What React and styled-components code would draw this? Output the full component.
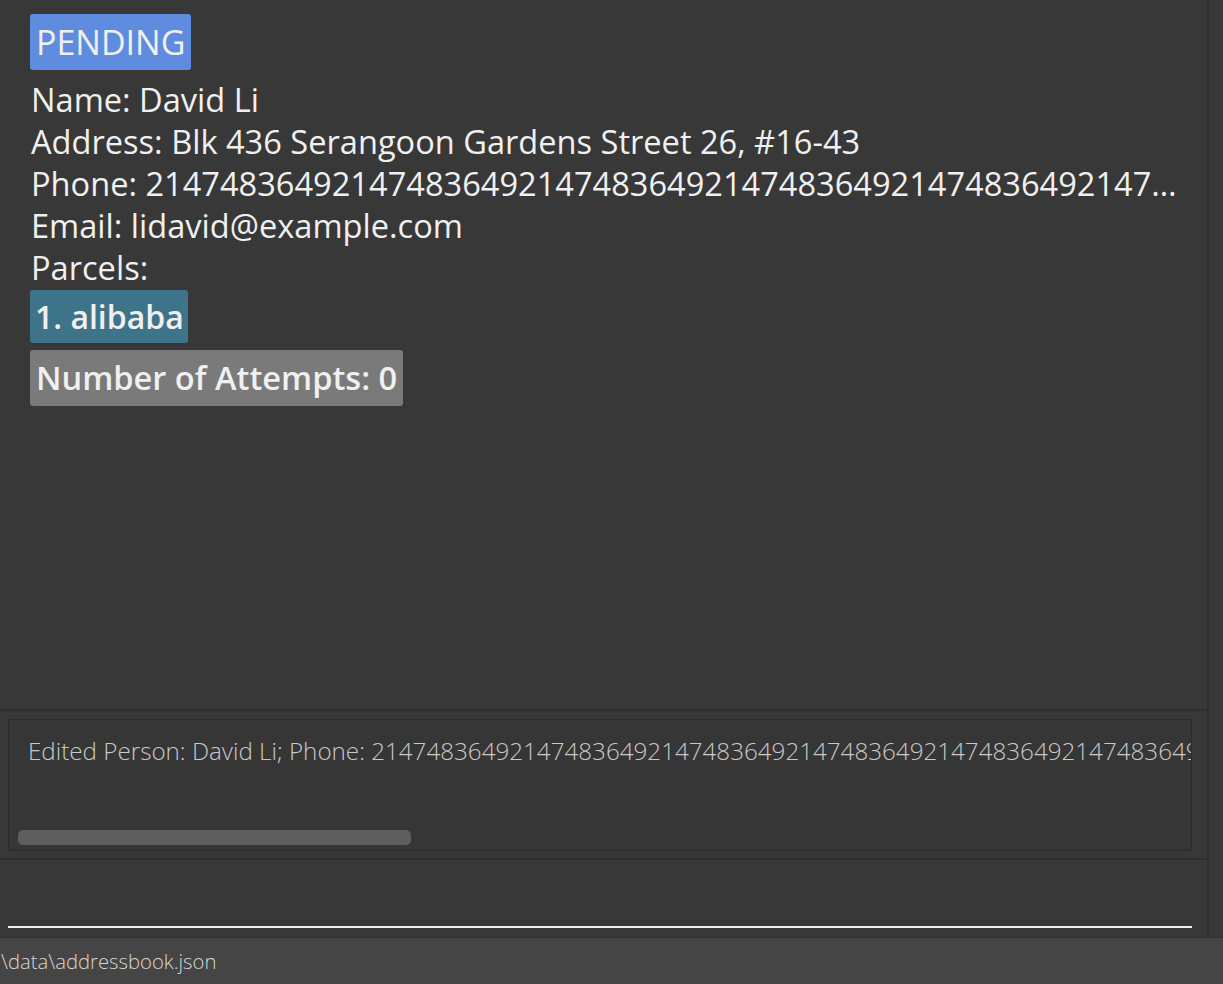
import React from "react";
import styled, { createGlobalStyle } from "styled-components";

const Global = createGlobalStyle`
  html, body { margin: 0; padding: 0; background: #383838; }
  body { font-family: "Open Sans", "Noto Sans", sans-serif; overflow: hidden; }
  * { box-sizing: border-box; }
`;

const Page = styled.div`
  width: 1223px;
  height: 984px;
  display: flex;
  flex-direction: column;
  background: #383838;
`;

const Body = styled.div`
  flex: 1;
  display: grid;
  grid-template-columns: 1207px 2px 1fr;
  min-height: 0;
`;

const VDivider = styled.div`
  background: #2e2e2e;
`;

const MainColumn = styled.div`
  display: flex;
  flex-direction: column;
  min-height: 0;
`;

const HDivider = styled.div`
  height: 2px;
  background: #2e2e2e;
`;

const CardArea = styled.div`
  height: 709px;
  padding: 14px 0 0 30px;
  display: flex;
  flex-direction: column;
  align-items: flex-start;
`;

const Badge = styled.div`
  background: ${(p) => p.$bg};
  color: #f0f0f0;
  font-size: ${(p) => p.$size || 32}px;
  font-weight: ${(p) => p.$weight || 400};
  line-height: ${(p) => p.$h || 56}px;
  height: ${(p) => p.$h || 56}px;
  padding: 0 ${(p) => p.$pr || 6}px 0 ${(p) => p.$pl || 6}px;
  border-radius: 3px;
  margin-top: ${(p) => p.$mt || 0}px;
`;

const Fields = styled.div`
  display: flex;
  flex-direction: column;
  padding-top: 9px;
  margin-bottom: 1px;
`;

const Field = styled.div`
  color: #f0f0f0;
  font-size: 32.6px;
  line-height: 42px;
  white-space: nowrap;
  overflow: hidden;
  text-overflow: ellipsis;
  max-width: 1152px;
  padding-left: 1px;
`;

const ResultWrap = styled.div`
  height: 147px;
  padding: 8px 15px 7px 8px;
  display: flex;
`;

const ResultBox = styled.div`
  flex: 1;
  border: 1px solid #2b2b2b;
  background: #363636;
  position: relative;
  overflow: hidden;
  padding: 14px 0 0 19px;
`;

const ResultText = styled.div`
  color: #c9c9c9;
  font-size: 24.2px;
  font-weight: 300;
  white-space: nowrap;
  overflow: hidden;
  width: 1163px;
`;

const ScrollThumb = styled.div`
  position: absolute;
  left: 9px;
  bottom: 5px;
  width: 393px;
  height: 15px;
  border-radius: 5px;
  background: #5e5e5e;
`;

const CommandArea = styled.div`
  flex: 1;
  padding: 0 15px 9px 8px;
  display: flex;
  align-items: flex-end;
`;

const CommandLine = styled.div`
  flex: 1;
  height: 2px;
  background: #f2f2f2;
`;

const StatusBar = styled.div`
  height: 47px;
  background: #454545;
  border-top: 1px solid #333;
  color: #d6d6d6;
  font-size: 20.3px;
  font-weight: 300;
  display: flex;
  align-items: center;
  padding: 0 0 0 1px;
`;

export default function App() {
  const phone = "Phone: " + "2147483649".repeat(12);
  const result = "Edited Person: David Li; Phone: " + "2147483649".repeat(12);
  return (
    <>
      <Global />
      <Page>
        <Body>
          <MainColumn>
            <CardArea>
              <Badge $bg="#5f8cdf" $size={34}>PENDING</Badge>
              <Fields>
                <Field>Name: David Li</Field>
                <Field>Address: Blk 436 Serangoon Gardens Street 26, #16-43</Field>
                <Field>{phone}</Field>
                <Field>Email: lidavid@example.com</Field>
                <Field>Parcels:</Field>
              </Fields>
              <Badge $bg="#3e7489" $weight={600} $h={53} $pl={5} $pr={4}>1. alibaba</Badge>
              <Badge $bg="#7a7a7a" $weight={600} $size={32.6} $mt={7}>Number of Attempts: 0</Badge>
            </CardArea>
            <HDivider />
            <ResultWrap>
              <ResultBox>
                <ResultText>{result}</ResultText>
                <ScrollThumb />
              </ResultBox>
            </ResultWrap>
            <HDivider />
            <CommandArea>
              <CommandLine />
            </CommandArea>
          </MainColumn>
          <VDivider />
          <div />
        </Body>
        <StatusBar>\data\addressbook.json</StatusBar>
      </Page>
    </>
  );
}
